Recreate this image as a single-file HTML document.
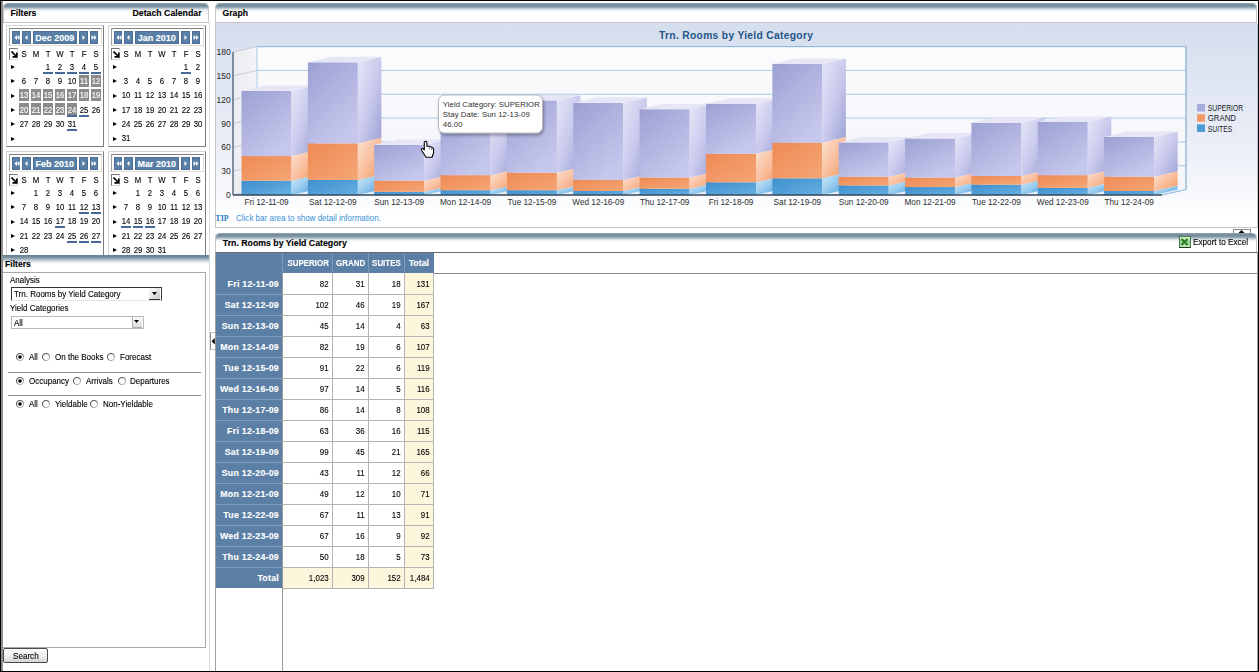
<!DOCTYPE html>
<html><head><meta charset="utf-8">
<style>
html,body{margin:0;padding:0;}
body{width:1259px;height:672px;overflow:hidden;position:relative;background:#fff;font-family:"Liberation Sans", sans-serif;font-size:8px;color:#000;-webkit-text-stroke:0.12px currentColor;}
.abs{position:absolute;}
.t{position:absolute;white-space:nowrap;line-height:1;}
.tn{font-size:8.8px;transform:scaleX(0.91);transform-origin:0 50%;}
.hdr{position:absolute;border-radius:5px 5px 0 0;background:linear-gradient(to bottom,#9aabb6 0px,#7890a0 1px,#758c9b 3px,#9aacb7 4.5px,#cdd7dd 6px,#eef2f4 7.5px,#fff 9px,#fff 100%);border-bottom:1px solid #c4c4c4;box-shadow:inset 1px 0 0 #c4c8cc,inset -1px 0 0 #c4c8cc;}
.cal{position:absolute;width:98px;height:122px;}
.calo{position:absolute;left:0;top:0;width:96px;height:120px;border:1px solid #d4d4d4;border-right:1.5px solid #7c7c7c;border-bottom:1.5px solid #7c7c7c;}
.nav{position:absolute;left:2.5px;top:3px;width:91px;height:16px;border:1px solid #e4ddd4;border-top-color:#808080;border-left-color:#a0a0a0;background:#fff;}
.nb{position:absolute;top:2px;height:12.6px;background:#5a7fa6;color:#fff;box-shadow:inset 0 0 0 1px #4d6f95;}
.dn{position:absolute;width:12px;text-align:center;line-height:1;font-size:9px;transform:scaleX(0.86);}
.hl{position:absolute;width:10.5px;height:12px;background:#8b8b8b;}
.ul{position:absolute;width:10.5px;height:2px;background:#46699a;}
.wk{position:absolute;width:0;height:0;border-left:4.2px solid #000;border-top:2.3px solid transparent;border-bottom:2.3px solid transparent;}
</style></head><body>

<div class="abs" style="left:0;top:0;width:1259px;height:1px;background:#000"></div>
<div class="abs" style="left:0;top:671px;width:1259px;height:1px;background:#000"></div>
<div class="abs" style="left:0;top:0;width:1px;height:672px;background:#000"></div>
<div class="abs" style="left:1px;top:1px;width:2px;height:670px;background:#8e8e8e"></div>
<div class="abs" style="left:1258px;top:0;width:1px;height:672px;background:#000"></div>
<div class="hdr" style="left:3px;top:3px;width:206px;height:19px;"></div>
<div class="t" style="left:10.5px;top:9.2px;font-weight:bold;font-size:8.6px;">Filters</div>
<div class="t" style="left:132.5px;top:9.2px;font-weight:bold;font-size:8.75px;">Detach Calendar</div>
<div class="abs" style="left:209px;top:22px;width:1px;height:649px;background:#d8dde2"></div>
<div class="abs" style="left:0;top:0;width:209px;height:255px;overflow:hidden;">
<div class="cal" style="left:6px;top:25px;"><div class="calo"></div><div class="nav"><div class="nb" style="left:2.15px;width:8.549999999999999px;"><svg width="9" height="13" style="position:absolute;left:0;top:0"><path d="M2.5 6.5 L5 4 L5 9 Z M5 6.5 L7.5 4 L7.5 9 Z" fill="#fff"/></svg></div><div class="nb" style="left:12.6px;width:8.799999999999999px;"><svg width="9" height="13" style="position:absolute;left:0;top:0"><path d="M3 6.5 L5.5 4 L5.5 9 Z" fill="#fff"/></svg></div><div class="nb" style="left:23.1px;width:44.49999999999999px;"><div class="t" style="left:0;width:44.49999999999999px;text-align:center;top:2.5px;font-weight:bold;font-size:9px;">Dec 2009</div></div><div class="nb" style="left:69.7px;width:8.599999999999994px;"><svg width="9" height="13" style="position:absolute;left:0;top:0"><path d="M6 6.5 L3.5 4 L3.5 9 Z" fill="#fff"/></svg></div><div class="nb" style="left:80.3px;width:8.600000000000009px;"><svg width="9" height="13" style="position:absolute;left:0;top:0"><path d="M6.5 6.5 L4 4 L4 9 Z M4 6.5 L1.5 4 L1.5 9 Z" fill="#fff"/></svg></div></div><div class="abs" style="left:2.5px;top:23px;width:7px;height:10px;border:1px solid #d8d8d8;border-top-color:#777;border-left-color:#777;"></div><svg width="8" height="8" style="position:absolute;left:4.5px;top:25.5px"><path d="M0.5 0.5 L5.5 5.5 M5.8 1.5 L5.8 5.8 L1.5 5.8" stroke="#000" stroke-width="1.7" fill="none"/></svg><div class="dn" style="left:11.75px;top:24.9px;">S</div><div class="dn" style="left:23.75px;top:24.9px;">M</div><div class="dn" style="left:35.75px;top:24.9px;">T</div><div class="dn" style="left:47.75px;top:24.9px;">W</div><div class="dn" style="left:59.75px;top:24.9px;">T</div><div class="dn" style="left:71.75px;top:24.9px;">F</div><div class="dn" style="left:83.75px;top:24.9px;">S</div><div class="wk" style="left:4.6px;top:40.099999999999994px;"></div><div class="ul" style="left:36.5px;top:46.699999999999996px;"></div><div class="dn" style="left:35.75px;top:37.699999999999996px;color:#000">1</div><div class="ul" style="left:48.5px;top:46.699999999999996px;"></div><div class="dn" style="left:47.75px;top:37.699999999999996px;color:#000">2</div><div class="ul" style="left:60.5px;top:46.699999999999996px;"></div><div class="dn" style="left:59.75px;top:37.699999999999996px;color:#000">3</div><div class="ul" style="left:72.5px;top:46.699999999999996px;"></div><div class="dn" style="left:71.75px;top:37.699999999999996px;color:#000">4</div><div class="ul" style="left:84.5px;top:46.699999999999996px;"></div><div class="dn" style="left:83.75px;top:37.699999999999996px;color:#000">5</div><div class="wk" style="left:4.6px;top:54.39999999999999px;"></div><div class="dn" style="left:11.75px;top:51.99999999999999px;color:#000">6</div><div class="dn" style="left:23.75px;top:51.99999999999999px;color:#000">7</div><div class="dn" style="left:35.75px;top:51.99999999999999px;color:#000">8</div><div class="dn" style="left:47.75px;top:51.99999999999999px;color:#000">9</div><div class="dn" style="left:59.75px;top:51.99999999999999px;color:#000">10</div><div class="hl" style="left:72.5px;top:49.8px;"></div><div class="dn" style="left:71.75px;top:51.99999999999999px;color:#fff">11</div><div class="hl" style="left:84.5px;top:49.8px;"></div><div class="dn" style="left:83.75px;top:51.99999999999999px;color:#fff">12</div><div class="wk" style="left:4.6px;top:68.7px;"></div><div class="hl" style="left:12.5px;top:64.10000000000001px;"></div><div class="dn" style="left:11.75px;top:66.30000000000001px;color:#fff">13</div><div class="hl" style="left:24.5px;top:64.10000000000001px;"></div><div class="dn" style="left:23.75px;top:66.30000000000001px;color:#fff">14</div><div class="hl" style="left:36.5px;top:64.10000000000001px;"></div><div class="dn" style="left:35.75px;top:66.30000000000001px;color:#fff">15</div><div class="hl" style="left:48.5px;top:64.10000000000001px;"></div><div class="dn" style="left:47.75px;top:66.30000000000001px;color:#fff">16</div><div class="hl" style="left:60.5px;top:64.10000000000001px;"></div><div class="dn" style="left:59.75px;top:66.30000000000001px;color:#fff">17</div><div class="hl" style="left:72.5px;top:64.10000000000001px;"></div><div class="dn" style="left:71.75px;top:66.30000000000001px;color:#fff">18</div><div class="hl" style="left:84.5px;top:64.10000000000001px;"></div><div class="dn" style="left:83.75px;top:66.30000000000001px;color:#fff">19</div><div class="wk" style="left:4.6px;top:83.0px;"></div><div class="hl" style="left:12.5px;top:78.4px;"></div><div class="dn" style="left:11.75px;top:80.60000000000001px;color:#fff">20</div><div class="hl" style="left:24.5px;top:78.4px;"></div><div class="dn" style="left:23.75px;top:80.60000000000001px;color:#fff">21</div><div class="hl" style="left:36.5px;top:78.4px;"></div><div class="dn" style="left:35.75px;top:80.60000000000001px;color:#fff">22</div><div class="hl" style="left:48.5px;top:78.4px;"></div><div class="dn" style="left:47.75px;top:80.60000000000001px;color:#fff">23</div><div class="hl" style="left:60.5px;top:78.4px;"></div><div class="ul" style="left:60.5px;top:89.60000000000001px;"></div><div class="dn" style="left:59.75px;top:80.60000000000001px;color:#fff">24</div><div class="ul" style="left:72.5px;top:89.60000000000001px;"></div><div class="dn" style="left:71.75px;top:80.60000000000001px;color:#000">25</div><div class="dn" style="left:83.75px;top:80.60000000000001px;color:#000">26</div><div class="wk" style="left:4.6px;top:97.3px;"></div><div class="dn" style="left:11.75px;top:94.9px;color:#000">27</div><div class="dn" style="left:23.75px;top:94.9px;color:#000">28</div><div class="dn" style="left:35.75px;top:94.9px;color:#000">29</div><div class="dn" style="left:47.75px;top:94.9px;color:#000">30</div><div class="ul" style="left:60.5px;top:103.9px;"></div><div class="dn" style="left:59.75px;top:94.9px;color:#000">31</div><div class="wk" style="left:4.6px;top:111.6px;"></div></div>
<div class="cal" style="left:108px;top:25px;"><div class="calo"></div><div class="nav"><div class="nb" style="left:2.15px;width:8.549999999999999px;"><svg width="9" height="13" style="position:absolute;left:0;top:0"><path d="M2.5 6.5 L5 4 L5 9 Z M5 6.5 L7.5 4 L7.5 9 Z" fill="#fff"/></svg></div><div class="nb" style="left:12.6px;width:8.799999999999999px;"><svg width="9" height="13" style="position:absolute;left:0;top:0"><path d="M3 6.5 L5.5 4 L5.5 9 Z" fill="#fff"/></svg></div><div class="nb" style="left:23.1px;width:44.49999999999999px;"><div class="t" style="left:0;width:44.49999999999999px;text-align:center;top:2.5px;font-weight:bold;font-size:9px;">Jan 2010</div></div><div class="nb" style="left:69.7px;width:8.599999999999994px;"><svg width="9" height="13" style="position:absolute;left:0;top:0"><path d="M6 6.5 L3.5 4 L3.5 9 Z" fill="#fff"/></svg></div><div class="nb" style="left:80.3px;width:8.600000000000009px;"><svg width="9" height="13" style="position:absolute;left:0;top:0"><path d="M6.5 6.5 L4 4 L4 9 Z M4 6.5 L1.5 4 L1.5 9 Z" fill="#fff"/></svg></div></div><div class="abs" style="left:2.5px;top:23px;width:7px;height:10px;border:1px solid #d8d8d8;border-top-color:#777;border-left-color:#777;"></div><svg width="8" height="8" style="position:absolute;left:4.5px;top:25.5px"><path d="M0.5 0.5 L5.5 5.5 M5.8 1.5 L5.8 5.8 L1.5 5.8" stroke="#000" stroke-width="1.7" fill="none"/></svg><div class="dn" style="left:11.75px;top:24.9px;">S</div><div class="dn" style="left:23.75px;top:24.9px;">M</div><div class="dn" style="left:35.75px;top:24.9px;">T</div><div class="dn" style="left:47.75px;top:24.9px;">W</div><div class="dn" style="left:59.75px;top:24.9px;">T</div><div class="dn" style="left:71.75px;top:24.9px;">F</div><div class="dn" style="left:83.75px;top:24.9px;">S</div><div class="wk" style="left:4.6px;top:40.099999999999994px;"></div><div class="ul" style="left:72.5px;top:46.699999999999996px;"></div><div class="dn" style="left:71.75px;top:37.699999999999996px;color:#000">1</div><div class="dn" style="left:83.75px;top:37.699999999999996px;color:#000">2</div><div class="wk" style="left:4.6px;top:54.39999999999999px;"></div><div class="dn" style="left:11.75px;top:51.99999999999999px;color:#000">3</div><div class="dn" style="left:23.75px;top:51.99999999999999px;color:#000">4</div><div class="dn" style="left:35.75px;top:51.99999999999999px;color:#000">5</div><div class="dn" style="left:47.75px;top:51.99999999999999px;color:#000">6</div><div class="dn" style="left:59.75px;top:51.99999999999999px;color:#000">7</div><div class="dn" style="left:71.75px;top:51.99999999999999px;color:#000">8</div><div class="dn" style="left:83.75px;top:51.99999999999999px;color:#000">9</div><div class="wk" style="left:4.6px;top:68.7px;"></div><div class="dn" style="left:11.75px;top:66.30000000000001px;color:#000">10</div><div class="dn" style="left:23.75px;top:66.30000000000001px;color:#000">11</div><div class="dn" style="left:35.75px;top:66.30000000000001px;color:#000">12</div><div class="dn" style="left:47.75px;top:66.30000000000001px;color:#000">13</div><div class="dn" style="left:59.75px;top:66.30000000000001px;color:#000">14</div><div class="dn" style="left:71.75px;top:66.30000000000001px;color:#000">15</div><div class="dn" style="left:83.75px;top:66.30000000000001px;color:#000">16</div><div class="wk" style="left:4.6px;top:83.0px;"></div><div class="dn" style="left:11.75px;top:80.60000000000001px;color:#000">17</div><div class="dn" style="left:23.75px;top:80.60000000000001px;color:#000">18</div><div class="dn" style="left:35.75px;top:80.60000000000001px;color:#000">19</div><div class="dn" style="left:47.75px;top:80.60000000000001px;color:#000">20</div><div class="dn" style="left:59.75px;top:80.60000000000001px;color:#000">21</div><div class="dn" style="left:71.75px;top:80.60000000000001px;color:#000">22</div><div class="dn" style="left:83.75px;top:80.60000000000001px;color:#000">23</div><div class="wk" style="left:4.6px;top:97.3px;"></div><div class="dn" style="left:11.75px;top:94.9px;color:#000">24</div><div class="dn" style="left:23.75px;top:94.9px;color:#000">25</div><div class="dn" style="left:35.75px;top:94.9px;color:#000">26</div><div class="dn" style="left:47.75px;top:94.9px;color:#000">27</div><div class="dn" style="left:59.75px;top:94.9px;color:#000">28</div><div class="dn" style="left:71.75px;top:94.9px;color:#000">29</div><div class="dn" style="left:83.75px;top:94.9px;color:#000">30</div><div class="wk" style="left:4.6px;top:111.6px;"></div><div class="dn" style="left:11.75px;top:109.2px;color:#000">31</div></div>
<div class="cal" style="left:6px;top:151px;"><div class="calo"></div><div class="nav"><div class="nb" style="left:2.15px;width:8.549999999999999px;"><svg width="9" height="13" style="position:absolute;left:0;top:0"><path d="M2.5 6.5 L5 4 L5 9 Z M5 6.5 L7.5 4 L7.5 9 Z" fill="#fff"/></svg></div><div class="nb" style="left:12.6px;width:8.799999999999999px;"><svg width="9" height="13" style="position:absolute;left:0;top:0"><path d="M3 6.5 L5.5 4 L5.5 9 Z" fill="#fff"/></svg></div><div class="nb" style="left:23.1px;width:44.49999999999999px;"><div class="t" style="left:0;width:44.49999999999999px;text-align:center;top:2.5px;font-weight:bold;font-size:9px;">Feb 2010</div></div><div class="nb" style="left:69.7px;width:8.599999999999994px;"><svg width="9" height="13" style="position:absolute;left:0;top:0"><path d="M6 6.5 L3.5 4 L3.5 9 Z" fill="#fff"/></svg></div><div class="nb" style="left:80.3px;width:8.600000000000009px;"><svg width="9" height="13" style="position:absolute;left:0;top:0"><path d="M6.5 6.5 L4 4 L4 9 Z M4 6.5 L1.5 4 L1.5 9 Z" fill="#fff"/></svg></div></div><div class="abs" style="left:2.5px;top:23px;width:7px;height:10px;border:1px solid #d8d8d8;border-top-color:#777;border-left-color:#777;"></div><svg width="8" height="8" style="position:absolute;left:4.5px;top:25.5px"><path d="M0.5 0.5 L5.5 5.5 M5.8 1.5 L5.8 5.8 L1.5 5.8" stroke="#000" stroke-width="1.7" fill="none"/></svg><div class="dn" style="left:11.75px;top:24.9px;">S</div><div class="dn" style="left:23.75px;top:24.9px;">M</div><div class="dn" style="left:35.75px;top:24.9px;">T</div><div class="dn" style="left:47.75px;top:24.9px;">W</div><div class="dn" style="left:59.75px;top:24.9px;">T</div><div class="dn" style="left:71.75px;top:24.9px;">F</div><div class="dn" style="left:83.75px;top:24.9px;">S</div><div class="wk" style="left:4.6px;top:40.099999999999994px;"></div><div class="dn" style="left:23.75px;top:37.699999999999996px;color:#000">1</div><div class="dn" style="left:35.75px;top:37.699999999999996px;color:#000">2</div><div class="dn" style="left:47.75px;top:37.699999999999996px;color:#000">3</div><div class="dn" style="left:59.75px;top:37.699999999999996px;color:#000">4</div><div class="dn" style="left:71.75px;top:37.699999999999996px;color:#000">5</div><div class="dn" style="left:83.75px;top:37.699999999999996px;color:#000">6</div><div class="wk" style="left:4.6px;top:54.39999999999999px;"></div><div class="dn" style="left:11.75px;top:51.99999999999999px;color:#000">7</div><div class="dn" style="left:23.75px;top:51.99999999999999px;color:#000">8</div><div class="dn" style="left:35.75px;top:51.99999999999999px;color:#000">9</div><div class="dn" style="left:47.75px;top:51.99999999999999px;color:#000">10</div><div class="dn" style="left:59.75px;top:51.99999999999999px;color:#000">11</div><div class="ul" style="left:72.5px;top:60.99999999999999px;"></div><div class="dn" style="left:71.75px;top:51.99999999999999px;color:#000">12</div><div class="ul" style="left:84.5px;top:60.99999999999999px;"></div><div class="dn" style="left:83.75px;top:51.99999999999999px;color:#000">13</div><div class="wk" style="left:4.6px;top:68.7px;"></div><div class="dn" style="left:11.75px;top:66.30000000000001px;color:#000">14</div><div class="dn" style="left:23.75px;top:66.30000000000001px;color:#000">15</div><div class="dn" style="left:35.75px;top:66.30000000000001px;color:#000">16</div><div class="ul" style="left:48.5px;top:75.30000000000001px;"></div><div class="dn" style="left:47.75px;top:66.30000000000001px;color:#000">17</div><div class="dn" style="left:59.75px;top:66.30000000000001px;color:#000">18</div><div class="dn" style="left:71.75px;top:66.30000000000001px;color:#000">19</div><div class="dn" style="left:83.75px;top:66.30000000000001px;color:#000">20</div><div class="wk" style="left:4.6px;top:83.0px;"></div><div class="dn" style="left:11.75px;top:80.60000000000001px;color:#000">21</div><div class="dn" style="left:23.75px;top:80.60000000000001px;color:#000">22</div><div class="dn" style="left:35.75px;top:80.60000000000001px;color:#000">23</div><div class="dn" style="left:47.75px;top:80.60000000000001px;color:#000">24</div><div class="ul" style="left:60.5px;top:89.60000000000001px;"></div><div class="dn" style="left:59.75px;top:80.60000000000001px;color:#000">25</div><div class="ul" style="left:72.5px;top:89.60000000000001px;"></div><div class="dn" style="left:71.75px;top:80.60000000000001px;color:#000">26</div><div class="ul" style="left:84.5px;top:89.60000000000001px;"></div><div class="dn" style="left:83.75px;top:80.60000000000001px;color:#000">27</div><div class="wk" style="left:4.6px;top:97.3px;"></div><div class="dn" style="left:11.75px;top:94.9px;color:#000">28</div><div class="wk" style="left:4.6px;top:111.6px;"></div></div>
<div class="cal" style="left:108px;top:151px;"><div class="calo"></div><div class="nav"><div class="nb" style="left:2.15px;width:8.549999999999999px;"><svg width="9" height="13" style="position:absolute;left:0;top:0"><path d="M2.5 6.5 L5 4 L5 9 Z M5 6.5 L7.5 4 L7.5 9 Z" fill="#fff"/></svg></div><div class="nb" style="left:12.6px;width:8.799999999999999px;"><svg width="9" height="13" style="position:absolute;left:0;top:0"><path d="M3 6.5 L5.5 4 L5.5 9 Z" fill="#fff"/></svg></div><div class="nb" style="left:23.1px;width:44.49999999999999px;"><div class="t" style="left:0;width:44.49999999999999px;text-align:center;top:2.5px;font-weight:bold;font-size:9px;">Mar 2010</div></div><div class="nb" style="left:69.7px;width:8.599999999999994px;"><svg width="9" height="13" style="position:absolute;left:0;top:0"><path d="M6 6.5 L3.5 4 L3.5 9 Z" fill="#fff"/></svg></div><div class="nb" style="left:80.3px;width:8.600000000000009px;"><svg width="9" height="13" style="position:absolute;left:0;top:0"><path d="M6.5 6.5 L4 4 L4 9 Z M4 6.5 L1.5 4 L1.5 9 Z" fill="#fff"/></svg></div></div><div class="abs" style="left:2.5px;top:23px;width:7px;height:10px;border:1px solid #d8d8d8;border-top-color:#777;border-left-color:#777;"></div><svg width="8" height="8" style="position:absolute;left:4.5px;top:25.5px"><path d="M0.5 0.5 L5.5 5.5 M5.8 1.5 L5.8 5.8 L1.5 5.8" stroke="#000" stroke-width="1.7" fill="none"/></svg><div class="dn" style="left:11.75px;top:24.9px;">S</div><div class="dn" style="left:23.75px;top:24.9px;">M</div><div class="dn" style="left:35.75px;top:24.9px;">T</div><div class="dn" style="left:47.75px;top:24.9px;">W</div><div class="dn" style="left:59.75px;top:24.9px;">T</div><div class="dn" style="left:71.75px;top:24.9px;">F</div><div class="dn" style="left:83.75px;top:24.9px;">S</div><div class="wk" style="left:4.6px;top:40.099999999999994px;"></div><div class="dn" style="left:23.75px;top:37.699999999999996px;color:#000">1</div><div class="dn" style="left:35.75px;top:37.699999999999996px;color:#000">2</div><div class="dn" style="left:47.75px;top:37.699999999999996px;color:#000">3</div><div class="dn" style="left:59.75px;top:37.699999999999996px;color:#000">4</div><div class="dn" style="left:71.75px;top:37.699999999999996px;color:#000">5</div><div class="dn" style="left:83.75px;top:37.699999999999996px;color:#000">6</div><div class="wk" style="left:4.6px;top:54.39999999999999px;"></div><div class="dn" style="left:11.75px;top:51.99999999999999px;color:#000">7</div><div class="dn" style="left:23.75px;top:51.99999999999999px;color:#000">8</div><div class="dn" style="left:35.75px;top:51.99999999999999px;color:#000">9</div><div class="dn" style="left:47.75px;top:51.99999999999999px;color:#000">10</div><div class="dn" style="left:59.75px;top:51.99999999999999px;color:#000">11</div><div class="dn" style="left:71.75px;top:51.99999999999999px;color:#000">12</div><div class="dn" style="left:83.75px;top:51.99999999999999px;color:#000">13</div><div class="wk" style="left:4.6px;top:68.7px;"></div><div class="ul" style="left:12.5px;top:75.30000000000001px;"></div><div class="dn" style="left:11.75px;top:66.30000000000001px;color:#000">14</div><div class="ul" style="left:24.5px;top:75.30000000000001px;"></div><div class="dn" style="left:23.75px;top:66.30000000000001px;color:#000">15</div><div class="ul" style="left:36.5px;top:75.30000000000001px;"></div><div class="dn" style="left:35.75px;top:66.30000000000001px;color:#000">16</div><div class="dn" style="left:47.75px;top:66.30000000000001px;color:#000">17</div><div class="dn" style="left:59.75px;top:66.30000000000001px;color:#000">18</div><div class="dn" style="left:71.75px;top:66.30000000000001px;color:#000">19</div><div class="dn" style="left:83.75px;top:66.30000000000001px;color:#000">20</div><div class="wk" style="left:4.6px;top:83.0px;"></div><div class="dn" style="left:11.75px;top:80.60000000000001px;color:#000">21</div><div class="dn" style="left:23.75px;top:80.60000000000001px;color:#000">22</div><div class="dn" style="left:35.75px;top:80.60000000000001px;color:#000">23</div><div class="dn" style="left:47.75px;top:80.60000000000001px;color:#000">24</div><div class="dn" style="left:59.75px;top:80.60000000000001px;color:#000">25</div><div class="dn" style="left:71.75px;top:80.60000000000001px;color:#000">26</div><div class="dn" style="left:83.75px;top:80.60000000000001px;color:#000">27</div><div class="wk" style="left:4.6px;top:97.3px;"></div><div class="dn" style="left:11.75px;top:94.9px;color:#000">28</div><div class="dn" style="left:23.75px;top:94.9px;color:#000">29</div><div class="dn" style="left:35.75px;top:94.9px;color:#000">30</div><div class="dn" style="left:47.75px;top:94.9px;color:#000">31</div><div class="wk" style="left:4.6px;top:111.6px;"></div></div>
</div>
<div class="abs" style="left:3px;top:255px;width:206px;height:17px;background:linear-gradient(to bottom,#687f8d 0px,#71889a 1.5px,#93a6b2 3.5px,#c5d1d8 5.5px,#eef2f4 7.5px,#fff 9px,#fff 100%);"></div>
<div class="t" style="left:5px;top:260px;font-weight:bold;font-size:8.6px;">Filters</div>
<div class="abs" style="left:3px;top:272px;width:202px;height:374px;border:1px solid #a8a8a8;border-left:none;"></div>
<div class="t tn" style="left:10px;top:275.6px;">Analysis</div>
<div class="abs" style="left:11px;top:287px;width:149px;height:11.5px;border:1px solid #e4e4e4;border-top-color:#333;border-left-color:#333;border-right-color:#333;background:#fff;"></div>
<div class="t tn" style="left:14px;top:289.6px;">Trn. Rooms by Yield Category</div>
<div class="abs" style="left:148.5px;top:288px;width:11.5px;height:10.5px;background:linear-gradient(135deg,#ffffff,#e4e4e4 50%,#c8c8c8);border-bottom:1px solid #333;"></div>
<svg width="6" height="4" style="position:absolute;left:151.5px;top:292.3px"><path d="M0 0 L5 0 L2.5 3.2 Z" fill="#000"/></svg>
<div class="t tn" style="left:10px;top:304.4px;">Yield Categories</div>
<div class="abs" style="left:11px;top:315.5px;width:131px;height:11.5px;border:1px solid #b8b8b8;background:#fff;"></div>
<div class="t tn" style="left:13.5px;top:318.6px;">All</div>
<div class="abs" style="left:132px;top:316.5px;width:9px;height:10.5px;background:linear-gradient(#fbfbfb,#dcdcdc);border:1px solid #b0b0b0;border-top:none;border-right:none;"></div>
<svg width="6" height="4" style="position:absolute;left:134px;top:320px"><path d="M0 0 L5 0 L2.5 3 Z" fill="#000"/></svg>
<svg width="12" height="12" style="position:absolute;left:14.3px;top:351.1px"><defs><linearGradient id="rg" x1="0" y1="0" x2="1" y2="1"><stop offset="0" stop-color="#333"/><stop offset="0.5" stop-color="#777"/><stop offset="1" stop-color="#ddd"/></linearGradient></defs><circle cx="6" cy="6" r="3.5" fill="#fff" stroke="url(#rg)" stroke-width="1.1"/><circle cx="6" cy="6" r="1.8" fill="#000"/></svg>
<div class="t tn" style="left:29px;top:352.8px;">All</div>
<svg width="12" height="12" style="position:absolute;left:40.3px;top:351.1px"><defs><linearGradient id="rg" x1="0" y1="0" x2="1" y2="1"><stop offset="0" stop-color="#333"/><stop offset="0.5" stop-color="#777"/><stop offset="1" stop-color="#ddd"/></linearGradient></defs><circle cx="6" cy="6" r="3.5" fill="#fff" stroke="url(#rg)" stroke-width="1.1"/></svg>
<div class="t tn" style="left:55px;top:352.8px;">On the Books</div>
<svg width="12" height="12" style="position:absolute;left:105.3px;top:351.1px"><defs><linearGradient id="rg" x1="0" y1="0" x2="1" y2="1"><stop offset="0" stop-color="#333"/><stop offset="0.5" stop-color="#777"/><stop offset="1" stop-color="#ddd"/></linearGradient></defs><circle cx="6" cy="6" r="3.5" fill="#fff" stroke="url(#rg)" stroke-width="1.1"/></svg>
<div class="t tn" style="left:120px;top:352.8px;">Forecast</div>
<div class="abs" style="left:8px;top:372px;width:193px;height:1px;background:#8c8c8c"></div>
<svg width="12" height="12" style="position:absolute;left:14.3px;top:375.40000000000003px"><defs><linearGradient id="rg" x1="0" y1="0" x2="1" y2="1"><stop offset="0" stop-color="#333"/><stop offset="0.5" stop-color="#777"/><stop offset="1" stop-color="#ddd"/></linearGradient></defs><circle cx="6" cy="6" r="3.5" fill="#fff" stroke="url(#rg)" stroke-width="1.1"/><circle cx="6" cy="6" r="1.8" fill="#000"/></svg>
<div class="t tn" style="left:29px;top:377.1px;">Occupancy</div>
<svg width="12" height="12" style="position:absolute;left:71.3px;top:375.40000000000003px"><defs><linearGradient id="rg" x1="0" y1="0" x2="1" y2="1"><stop offset="0" stop-color="#333"/><stop offset="0.5" stop-color="#777"/><stop offset="1" stop-color="#ddd"/></linearGradient></defs><circle cx="6" cy="6" r="3.5" fill="#fff" stroke="url(#rg)" stroke-width="1.1"/></svg>
<div class="t tn" style="left:86px;top:377.1px;">Arrivals</div>
<svg width="12" height="12" style="position:absolute;left:116.3px;top:375.40000000000003px"><defs><linearGradient id="rg" x1="0" y1="0" x2="1" y2="1"><stop offset="0" stop-color="#333"/><stop offset="0.5" stop-color="#777"/><stop offset="1" stop-color="#ddd"/></linearGradient></defs><circle cx="6" cy="6" r="3.5" fill="#fff" stroke="url(#rg)" stroke-width="1.1"/></svg>
<div class="t tn" style="left:130px;top:377.1px;">Departures</div>
<div class="abs" style="left:8px;top:394.5px;width:193px;height:1px;background:#8c8c8c"></div>
<svg width="12" height="12" style="position:absolute;left:14.3px;top:397.8px"><defs><linearGradient id="rg" x1="0" y1="0" x2="1" y2="1"><stop offset="0" stop-color="#333"/><stop offset="0.5" stop-color="#777"/><stop offset="1" stop-color="#ddd"/></linearGradient></defs><circle cx="6" cy="6" r="3.5" fill="#fff" stroke="url(#rg)" stroke-width="1.1"/><circle cx="6" cy="6" r="1.8" fill="#000"/></svg>
<div class="t tn" style="left:29px;top:399.5px;">All</div>
<svg width="12" height="12" style="position:absolute;left:40.3px;top:397.8px"><defs><linearGradient id="rg" x1="0" y1="0" x2="1" y2="1"><stop offset="0" stop-color="#333"/><stop offset="0.5" stop-color="#777"/><stop offset="1" stop-color="#ddd"/></linearGradient></defs><circle cx="6" cy="6" r="3.5" fill="#fff" stroke="url(#rg)" stroke-width="1.1"/></svg>
<div class="t tn" style="left:55px;top:399.5px;">Yieldable</div>
<svg width="12" height="12" style="position:absolute;left:88.3px;top:397.8px"><defs><linearGradient id="rg" x1="0" y1="0" x2="1" y2="1"><stop offset="0" stop-color="#333"/><stop offset="0.5" stop-color="#777"/><stop offset="1" stop-color="#ddd"/></linearGradient></defs><circle cx="6" cy="6" r="3.5" fill="#fff" stroke="url(#rg)" stroke-width="1.1"/></svg>
<div class="t tn" style="left:103px;top:399.5px;">Non-Yieldable</div>
<div class="abs" style="left:3px;top:648px;width:42.5px;height:12.5px;border:1.5px solid #4a4a4a;border-radius:2px;background:linear-gradient(#fdfdfd,#f0f0f0 50%,#d6d6d6);"></div>
<div class="t" style="left:12.5px;top:651.6px;font-size:9px;transform:scaleX(0.9);transform-origin:left center;">Search</div>
<div class="abs" style="left:210px;top:332px;width:4px;height:16px;border:1px solid #c0c0c0;border-right:none;border-left-color:#909090;background:#fff;"></div>
<svg width="5" height="7" style="position:absolute;left:211px;top:337.5px"><path d="M3.8 0 L0.6 3.2 L3.8 6.4 Z" fill="#000"/></svg>
<div class="hdr" style="left:215px;top:3px;width:1042px;height:19px;"></div>
<div class="t" style="left:222.6px;top:9.2px;font-weight:bold;font-size:8.6px;">Graph</div>
<div class="abs" style="left:215px;top:23px;width:1041px;height:204px;border:1px solid #c0c8d0;border-top:none;background:linear-gradient(to bottom,#d5deee 0px,#dce3f1 40px,#e8ecf6 110px,#f5f7fb 165px,#fff 190px);"></div>
<svg width="1259" height="672" style="position:absolute;left:0;top:0"><defs>
<linearGradient id="wallg" x1="0" y1="0" x2="0" y2="1"><stop offset="0" stop-color="#fbfbfd"/><stop offset="1" stop-color="#f4f5fa"/></linearGradient>
<linearGradient id="lwall" x1="0" y1="0" x2="1" y2="0"><stop offset="0" stop-color="#ececf1"/><stop offset="1" stop-color="#f3f4f7"/></linearGradient>
<linearGradient id="supF" x1="0" y1="0" x2="0.6" y2="1"><stop offset="0" stop-color="#9ca0d2"/><stop offset="1" stop-color="#c6c7ed"/></linearGradient>
<linearGradient id="supS" x1="0" y1="0" x2="1" y2="1"><stop offset="0" stop-color="#e6e6f7"/><stop offset="0.5" stop-color="#cacbed"/><stop offset="1" stop-color="#9ea1d6"/></linearGradient>
<linearGradient id="grdF" x1="0" y1="0" x2="1" y2="1"><stop offset="0" stop-color="#ee8a54"/><stop offset="1" stop-color="#f5a676"/></linearGradient>
<linearGradient id="grdS" x1="0" y1="0" x2="1" y2="1"><stop offset="0" stop-color="#fde2d2"/><stop offset="0.5" stop-color="#f9c0a0"/><stop offset="1" stop-color="#ef9760"/></linearGradient>
<linearGradient id="suiF" x1="0" y1="0" x2="1" y2="1"><stop offset="0" stop-color="#3f8fcd"/><stop offset="1" stop-color="#66b0e2"/></linearGradient>
<linearGradient id="suiS" x1="0" y1="0" x2="1" y2="1"><stop offset="0" stop-color="#cce8fa"/><stop offset="0.45" stop-color="#9ccef0"/><stop offset="1" stop-color="#4898d6"/></linearGradient>
<filter id="shd" x="-10%" y="-10%" width="130%" height="140%"><feGaussianBlur in="SourceAlpha" stdDeviation="1.5"/><feOffset dx="1" dy="2"/><feComponentTransfer><feFuncA type="linear" slope="0.35"/></feComponentTransfer><feMerge><feMergeNode/><feMergeNode in="SourceGraphic"/></feMerge></filter>
</defs><text x="736" y="38.7" text-anchor="middle" font-family="Liberation Sans" font-weight="bold" font-size="10.3" fill="#24558a" textLength="154" lengthAdjust="spacing">Trn. Rooms by Yield Category</text><rect x="257.0" y="46.6" width="929.0" height="143.0" fill="url(#wallg)"/><polygon points="233.0,52 257.0,46.6 257.0,189.6 233.0,195.0" fill="url(#lwall)"/><polygon points="233.0,195.0 257.0,189.6 1186.0,189.6 1162.0,195.0" fill="#e4eef8"/><line x1="233.0" y1="195.00" x2="257.0" y2="189.60" stroke="#c8ccd8" stroke-width="1"/><text x="230.8" y="198.00" text-anchor="end" font-family="Liberation Sans" font-size="8.5" fill="#282828">0</text><line x1="257.0" y1="165.77" x2="1186.0" y2="165.77" stroke="#a9cbe6" stroke-width="1"/><line x1="233.0" y1="171.17" x2="257.0" y2="165.77" stroke="#c8ccd8" stroke-width="1"/><text x="230.8" y="174.17" text-anchor="end" font-family="Liberation Sans" font-size="8.5" fill="#282828">30</text><line x1="257.0" y1="141.93" x2="1186.0" y2="141.93" stroke="#a9cbe6" stroke-width="1"/><line x1="233.0" y1="147.33" x2="257.0" y2="141.93" stroke="#c8ccd8" stroke-width="1"/><text x="230.8" y="150.33" text-anchor="end" font-family="Liberation Sans" font-size="8.5" fill="#282828">60</text><line x1="257.0" y1="118.10" x2="1186.0" y2="118.10" stroke="#a9cbe6" stroke-width="1"/><line x1="233.0" y1="123.50" x2="257.0" y2="118.10" stroke="#c8ccd8" stroke-width="1"/><text x="230.8" y="126.50" text-anchor="end" font-family="Liberation Sans" font-size="8.5" fill="#282828">90</text><line x1="257.0" y1="94.27" x2="1186.0" y2="94.27" stroke="#a9cbe6" stroke-width="1"/><line x1="233.0" y1="99.67" x2="257.0" y2="94.27" stroke="#c8ccd8" stroke-width="1"/><text x="230.8" y="102.67" text-anchor="end" font-family="Liberation Sans" font-size="8.5" fill="#282828">120</text><line x1="257.0" y1="70.43" x2="1186.0" y2="70.43" stroke="#a9cbe6" stroke-width="1"/><line x1="233.0" y1="75.83" x2="257.0" y2="70.43" stroke="#c8ccd8" stroke-width="1"/><text x="230.8" y="78.83" text-anchor="end" font-family="Liberation Sans" font-size="8.5" fill="#282828">150</text><line x1="257.0" y1="46.60" x2="1186.0" y2="46.60" stroke="#a9cbe6" stroke-width="1"/><line x1="233.0" y1="52.00" x2="257.0" y2="46.60" stroke="#c8ccd8" stroke-width="1"/><text x="230.8" y="55.00" text-anchor="end" font-family="Liberation Sans" font-size="8.5" fill="#282828">180</text><line x1="257.0" y1="46.6" x2="257.0" y2="189.6" stroke="#a9cbe6" stroke-width="1"/><line x1="1186.0" y1="46.6" x2="1186.0" y2="189.6" stroke="#6f9cc6" stroke-width="1"/><line x1="257.0" y1="46.6" x2="1186.0" y2="46.6" stroke="#8ab8dc" stroke-width="1"/><line x1="1162.0" y1="195.0" x2="1186.0" y2="189.6" stroke="#8ab8dc" stroke-width="1"/><rect x="241.50" y="180.70" width="50" height="14.30" fill="url(#suiF)"/><polygon points="291.50,180.70 315.00,175.20 315.00,189.50 291.50,195.00" fill="url(#suiS)"/><rect x="241.50" y="156.07" width="50" height="24.63" fill="url(#grdF)"/><polygon points="291.50,156.07 315.00,150.57 315.00,175.20 291.50,180.70" fill="url(#grdS)"/><rect x="241.50" y="90.93" width="50" height="65.14" fill="url(#supF)"/><polygon points="291.50,90.93 315.00,85.43 315.00,150.57 291.50,156.07" fill="url(#supS)"/><polygon points="241.50,90.93 291.50,90.93 315.00,85.43 265.00,85.43" fill="#e6e6f7"/><text x="266.50" y="205.3" text-anchor="middle" font-family="Liberation Sans" font-size="8.9" fill="#303030" textLength="44.14" lengthAdjust="spacingAndGlyphs">Fri 12-11-09</text><rect x="307.86" y="179.91" width="50" height="15.09" fill="url(#suiF)"/><polygon points="357.86,179.91 381.36,174.41 381.36,189.50 357.86,195.00" fill="url(#suiS)"/><rect x="307.86" y="143.36" width="50" height="36.54" fill="url(#grdF)"/><polygon points="357.86,143.36 381.36,137.86 381.36,174.41 357.86,179.91" fill="url(#grdS)"/><rect x="307.86" y="62.33" width="50" height="81.03" fill="url(#supF)"/><polygon points="357.86,62.33 381.36,56.83 381.36,137.86 357.86,143.36" fill="url(#supS)"/><polygon points="307.86,62.33 357.86,62.33 381.36,56.83 331.36,56.83" fill="#e6e6f7"/><text x="332.86" y="205.3" text-anchor="middle" font-family="Liberation Sans" font-size="8.9" fill="#303030" textLength="47.50" lengthAdjust="spacingAndGlyphs">Sat 12-12-09</text><rect x="374.21" y="191.82" width="50" height="3.18" fill="url(#suiF)"/><polygon points="424.21,191.82 447.71,186.32 447.71,189.50 424.21,195.00" fill="url(#suiS)"/><rect x="374.21" y="180.70" width="50" height="11.12" fill="url(#grdF)"/><polygon points="424.21,180.70 447.71,175.20 447.71,186.32 424.21,191.82" fill="url(#grdS)"/><rect x="374.21" y="144.95" width="50" height="35.75" fill="url(#supF)"/><polygon points="424.21,144.95 447.71,139.45 447.71,175.20 424.21,180.70" fill="url(#supS)"/><polygon points="374.21,144.95 424.21,144.95 447.71,139.45 397.71,139.45" fill="#e6e6f7"/><text x="399.21" y="205.3" text-anchor="middle" font-family="Liberation Sans" font-size="8.9" fill="#303030" textLength="49.79" lengthAdjust="spacingAndGlyphs">Sun 12-13-09</text><rect x="440.57" y="190.23" width="50" height="4.77" fill="url(#suiF)"/><polygon points="490.57,190.23 514.07,184.73 514.07,189.50 490.57,195.00" fill="url(#suiS)"/><rect x="440.57" y="175.14" width="50" height="15.09" fill="url(#grdF)"/><polygon points="490.57,175.14 514.07,169.64 514.07,184.73 490.57,190.23" fill="url(#grdS)"/><rect x="440.57" y="109.99" width="50" height="65.14" fill="url(#supF)"/><polygon points="490.57,109.99 514.07,104.49 514.07,169.64 490.57,175.14" fill="url(#supS)"/><polygon points="440.57,109.99 490.57,109.99 514.07,104.49 464.07,104.49" fill="#e6e6f7"/><text x="465.57" y="205.3" text-anchor="middle" font-family="Liberation Sans" font-size="8.9" fill="#303030" textLength="51.15" lengthAdjust="spacingAndGlyphs">Mon 12-14-09</text><rect x="506.93" y="190.23" width="50" height="4.77" fill="url(#suiF)"/><polygon points="556.93,190.23 580.43,184.73 580.43,189.50 556.93,195.00" fill="url(#suiS)"/><rect x="506.93" y="172.76" width="50" height="17.48" fill="url(#grdF)"/><polygon points="556.93,172.76 580.43,167.26 580.43,184.73 556.93,190.23" fill="url(#grdS)"/><rect x="506.93" y="100.46" width="50" height="72.29" fill="url(#supF)"/><polygon points="556.93,100.46 580.43,94.96 580.43,167.26 556.93,172.76" fill="url(#supS)"/><polygon points="506.93,100.46 556.93,100.46 580.43,94.96 530.43,94.96" fill="#e6e6f7"/><text x="531.93" y="205.3" text-anchor="middle" font-family="Liberation Sans" font-size="8.9" fill="#303030" textLength="49.02" lengthAdjust="spacingAndGlyphs">Tue 12-15-09</text><rect x="573.29" y="191.03" width="50" height="3.97" fill="url(#suiF)"/><polygon points="623.29,191.03 646.79,185.53 646.79,189.50 623.29,195.00" fill="url(#suiS)"/><rect x="573.29" y="179.91" width="50" height="11.12" fill="url(#grdF)"/><polygon points="623.29,179.91 646.79,174.41 646.79,185.53 623.29,191.03" fill="url(#grdS)"/><rect x="573.29" y="102.84" width="50" height="77.06" fill="url(#supF)"/><polygon points="623.29,102.84 646.79,97.34 646.79,174.41 623.29,179.91" fill="url(#supS)"/><polygon points="573.29,102.84 623.29,102.84 646.79,97.34 596.79,97.34" fill="#e6e6f7"/><text x="598.29" y="205.3" text-anchor="middle" font-family="Liberation Sans" font-size="8.9" fill="#303030" textLength="51.92" lengthAdjust="spacingAndGlyphs">Wed 12-16-09</text><rect x="639.64" y="188.64" width="50" height="6.36" fill="url(#suiF)"/><polygon points="689.64,188.64 713.14,183.14 713.14,189.50 689.64,195.00" fill="url(#suiS)"/><rect x="639.64" y="177.52" width="50" height="11.12" fill="url(#grdF)"/><polygon points="689.64,177.52 713.14,172.02 713.14,183.14 689.64,188.64" fill="url(#grdS)"/><rect x="639.64" y="109.20" width="50" height="68.32" fill="url(#supF)"/><polygon points="689.64,109.20 713.14,103.70 713.14,172.02 689.64,177.52" fill="url(#supS)"/><polygon points="639.64,109.20 689.64,109.20 713.14,103.70 663.14,103.70" fill="#e6e6f7"/><text x="664.64" y="205.3" text-anchor="middle" font-family="Liberation Sans" font-size="8.9" fill="#303030" textLength="49.33" lengthAdjust="spacingAndGlyphs">Thu 12-17-09</text><rect x="706.00" y="182.29" width="50" height="12.71" fill="url(#suiF)"/><polygon points="756.00,182.29 779.50,176.79 779.50,189.50 756.00,195.00" fill="url(#suiS)"/><rect x="706.00" y="153.69" width="50" height="28.60" fill="url(#grdF)"/><polygon points="756.00,153.69 779.50,148.19 779.50,176.79 756.00,182.29" fill="url(#grdS)"/><rect x="706.00" y="103.64" width="50" height="50.05" fill="url(#supF)"/><polygon points="756.00,103.64 779.50,98.14 779.50,148.19 756.00,153.69" fill="url(#supS)"/><polygon points="706.00,103.64 756.00,103.64 779.50,98.14 729.50,98.14" fill="#e6e6f7"/><text x="731.00" y="205.3" text-anchor="middle" font-family="Liberation Sans" font-size="8.9" fill="#303030" textLength="44.75" lengthAdjust="spacingAndGlyphs">Fri 12-18-09</text><rect x="772.36" y="178.32" width="50" height="16.68" fill="url(#suiF)"/><polygon points="822.36,178.32 845.86,172.82 845.86,189.50 822.36,195.00" fill="url(#suiS)"/><rect x="772.36" y="142.57" width="50" height="35.75" fill="url(#grdF)"/><polygon points="822.36,142.57 845.86,137.07 845.86,172.82 822.36,178.32" fill="url(#grdS)"/><rect x="772.36" y="63.92" width="50" height="78.65" fill="url(#supF)"/><polygon points="822.36,63.92 845.86,58.42 845.86,137.07 822.36,142.57" fill="url(#supS)"/><polygon points="772.36,63.92 822.36,63.92 845.86,58.42 795.86,58.42" fill="#e6e6f7"/><text x="797.36" y="205.3" text-anchor="middle" font-family="Liberation Sans" font-size="8.9" fill="#303030" textLength="47.50" lengthAdjust="spacingAndGlyphs">Sat 12-19-09</text><rect x="838.71" y="185.47" width="50" height="9.53" fill="url(#suiF)"/><polygon points="888.71,185.47 912.21,179.97 912.21,189.50 888.71,195.00" fill="url(#suiS)"/><rect x="838.71" y="176.73" width="50" height="8.74" fill="url(#grdF)"/><polygon points="888.71,176.73 912.21,171.23 912.21,179.97 888.71,185.47" fill="url(#grdS)"/><rect x="838.71" y="142.57" width="50" height="34.16" fill="url(#supF)"/><polygon points="888.71,142.57 912.21,137.07 912.21,171.23 888.71,176.73" fill="url(#supS)"/><polygon points="838.71,142.57 888.71,142.57 912.21,137.07 862.21,137.07" fill="#e6e6f7"/><text x="863.71" y="205.3" text-anchor="middle" font-family="Liberation Sans" font-size="8.9" fill="#303030" textLength="49.79" lengthAdjust="spacingAndGlyphs">Sun 12-20-09</text><rect x="905.07" y="187.06" width="50" height="7.94" fill="url(#suiF)"/><polygon points="955.07,187.06 978.57,181.56 978.57,189.50 955.07,195.00" fill="url(#suiS)"/><rect x="905.07" y="177.52" width="50" height="9.53" fill="url(#grdF)"/><polygon points="955.07,177.52 978.57,172.02 978.57,181.56 955.07,187.06" fill="url(#grdS)"/><rect x="905.07" y="138.59" width="50" height="38.93" fill="url(#supF)"/><polygon points="955.07,138.59 978.57,133.09 978.57,172.02 955.07,177.52" fill="url(#supS)"/><polygon points="905.07,138.59 955.07,138.59 978.57,133.09 928.57,133.09" fill="#e6e6f7"/><text x="930.07" y="205.3" text-anchor="middle" font-family="Liberation Sans" font-size="8.9" fill="#303030" textLength="51.15" lengthAdjust="spacingAndGlyphs">Mon 12-21-09</text><rect x="971.43" y="184.67" width="50" height="10.33" fill="url(#suiF)"/><polygon points="1021.43,184.67 1044.93,179.17 1044.93,189.50 1021.43,195.00" fill="url(#suiS)"/><rect x="971.43" y="175.93" width="50" height="8.74" fill="url(#grdF)"/><polygon points="1021.43,175.93 1044.93,170.43 1044.93,179.17 1021.43,184.67" fill="url(#grdS)"/><rect x="971.43" y="122.71" width="50" height="53.23" fill="url(#supF)"/><polygon points="1021.43,122.71 1044.93,117.21 1044.93,170.43 1021.43,175.93" fill="url(#supS)"/><polygon points="971.43,122.71 1021.43,122.71 1044.93,117.21 994.93,117.21" fill="#e6e6f7"/><text x="996.43" y="205.3" text-anchor="middle" font-family="Liberation Sans" font-size="8.9" fill="#303030" textLength="49.02" lengthAdjust="spacingAndGlyphs">Tue 12-22-09</text><rect x="1037.79" y="187.85" width="50" height="7.15" fill="url(#suiF)"/><polygon points="1087.79,187.85 1111.29,182.35 1111.29,189.50 1087.79,195.00" fill="url(#suiS)"/><rect x="1037.79" y="175.14" width="50" height="12.71" fill="url(#grdF)"/><polygon points="1087.79,175.14 1111.29,169.64 1111.29,182.35 1087.79,187.85" fill="url(#grdS)"/><rect x="1037.79" y="121.91" width="50" height="53.23" fill="url(#supF)"/><polygon points="1087.79,121.91 1111.29,116.41 1111.29,169.64 1087.79,175.14" fill="url(#supS)"/><polygon points="1037.79,121.91 1087.79,121.91 1111.29,116.41 1061.29,116.41" fill="#e6e6f7"/><text x="1062.79" y="205.3" text-anchor="middle" font-family="Liberation Sans" font-size="8.9" fill="#303030" textLength="51.92" lengthAdjust="spacingAndGlyphs">Wed 12-23-09</text><rect x="1104.14" y="191.03" width="50" height="3.97" fill="url(#suiF)"/><polygon points="1154.14,191.03 1177.64,185.53 1177.64,189.50 1154.14,195.00" fill="url(#suiS)"/><rect x="1104.14" y="176.73" width="50" height="14.30" fill="url(#grdF)"/><polygon points="1154.14,176.73 1177.64,171.23 1177.64,185.53 1154.14,191.03" fill="url(#grdS)"/><rect x="1104.14" y="137.01" width="50" height="39.72" fill="url(#supF)"/><polygon points="1154.14,137.01 1177.64,131.51 1177.64,171.23 1154.14,176.73" fill="url(#supS)"/><polygon points="1104.14,137.01 1154.14,137.01 1177.64,131.51 1127.64,131.51" fill="#e6e6f7"/><text x="1129.14" y="205.3" text-anchor="middle" font-family="Liberation Sans" font-size="8.9" fill="#303030" textLength="49.33" lengthAdjust="spacingAndGlyphs">Thu 12-24-09</text><line x1="233.0" y1="52" x2="233.0" y2="195.0" stroke="#4a5a6c" stroke-width="1.3"/><line x1="233.0" y1="195.0" x2="1162.0" y2="195.0" stroke="#34465a" stroke-width="1.4"/><rect x="1197" y="104.00" width="8" height="7.5" fill="#a8abdf"/><text x="1207.8" y="111.20" font-family="Liberation Sans" font-size="8.2" fill="#202020" textLength="35.2" lengthAdjust="spacingAndGlyphs">SUPERIOR</text><rect x="1197" y="114.20" width="8" height="7.5" fill="#f39a66"/><text x="1207.8" y="121.40" font-family="Liberation Sans" font-size="8.2" fill="#202020" textLength="28.1" lengthAdjust="spacingAndGlyphs">GRAND</text><rect x="1197" y="124.40" width="8" height="7.5" fill="#4c9ad4"/><text x="1207.8" y="131.60" font-family="Liberation Sans" font-size="8.2" fill="#202020" textLength="24.4" lengthAdjust="spacingAndGlyphs">SUITES</text><rect x="438.5" y="95" width="104" height="38" rx="6" ry="6" fill="#fff" stroke="#b8b8c0" stroke-width="1" filter="url(#shd)"/><text x="442.8" y="107.40" font-family="Liberation Sans" font-size="7.8" fill="#303030" letter-spacing="0.05">Yield Category: SUPERIOR</text><text x="442.8" y="117.00" font-family="Liberation Sans" font-size="7.8" fill="#303030" letter-spacing="0.05">Stay Date: Sun 12-13-09</text><text x="442.8" y="126.60" font-family="Liberation Sans" font-size="7.8" fill="#303030" letter-spacing="0.05">46.00</text><path d="M424.3 142.2 Q425.6 140.4 426.9 142.2 L426.9 146.3 L429.5 146.3 L431.8 147.2 L433.6 148.6 L433.6 153 L432 157.3 L426 157.3 L421.3 149.8 Q421.6 148.1 423 148.6 L424.3 150 Z" fill="#fff" stroke="#000" stroke-width="1.1" stroke-linejoin="round"/><path d="M429.3 146.6 L429.3 149.5 M431.6 147.4 L431.6 150" stroke="#555" stroke-width="0.7"/><text x="215.3" y="220.8" font-family="Liberation Serif" font-weight="bold" font-size="9" fill="#2a7cc4" textLength="13.5" lengthAdjust="spacingAndGlyphs">TIP</text><text x="236" y="220.9" font-family="Liberation Sans" font-size="8.6" fill="#3990d6" textLength="145" lengthAdjust="spacingAndGlyphs">Click bar area to show detail information.</text></svg>
<div class="abs" style="left:1233px;top:229px;width:16px;height:6px;border:1px solid #8a8a8a;border-bottom:none;background:#fff;"></div>
<svg width="7" height="4" style="position:absolute;left:1238px;top:230px"><path d="M0 3.5 L3.5 0 L7 3.5 Z" fill="#000"/></svg>
<div class="hdr" style="left:215px;top:233px;width:1042px;height:18.5px;border-bottom:1px solid #6a6a6a;"></div>
<div class="t" style="left:222.8px;top:238.6px;font-weight:bold;font-size:8.75px;">Trn. Rooms by Yield Category</div>
<div class="abs" style="left:1178.5px;top:236.2px;width:10px;height:9.6px;border:1px solid #4a744a;border-bottom-color:#203a20;background:linear-gradient(#d8f4d0,#8ed08a 50%,#c8eec0);"></div>
<svg width="10" height="10" style="position:absolute;left:1179.5px;top:237.2px"><path d="M1.5 2 L7.5 8 M7.5 2 L1.5 8" stroke="#2a7a2a" stroke-width="2"/></svg>
<div class="t tn" style="left:1192.5px;top:237.6px;font-size:9.2px;transform:scaleX(0.89);">Export to Excel</div>
<div class="abs" style="left:215px;top:252px;width:1px;height:419px;background:#a0a0a0"></div>
<div class="abs" style="left:1257px;top:252px;width:1px;height:419px;background:#a0a0a0"></div>
<div class="abs" style="left:216px;top:273px;width:1041px;height:1px;background:#8c8c8c"></div>
<div class="abs" style="left:216px;top:252.5px;width:218px;height:20.5px;background:#5c7fa5"></div><div class="abs" style="left:216px;top:273px;width:67px;height:315px;background:#5c7fa5"></div><div class="abs" style="left:283px;top:273px;width:122px;height:294px;background:#fff"></div><div class="abs" style="left:405px;top:273px;width:29px;height:315px;background:#fdf6dc"></div><div class="abs" style="left:283px;top:567px;width:151px;height:21px;background:#fdf6dc"></div><div class="abs" style="left:282px;top:253px;width:1px;height:20px;background:#7f9bba"></div><div class="abs" style="left:332px;top:253px;width:1px;height:20px;background:#7f9bba"></div><div class="abs" style="left:368px;top:253px;width:1px;height:20px;background:#7f9bba"></div><div class="abs" style="left:404px;top:253px;width:1px;height:20px;background:#7f9bba"></div><div class="abs" style="left:216px;top:294px;width:66px;height:1px;background:#819cb8"></div><div class="abs" style="left:216px;top:315px;width:66px;height:1px;background:#819cb8"></div><div class="abs" style="left:216px;top:336px;width:66px;height:1px;background:#819cb8"></div><div class="abs" style="left:216px;top:357px;width:66px;height:1px;background:#819cb8"></div><div class="abs" style="left:216px;top:378px;width:66px;height:1px;background:#819cb8"></div><div class="abs" style="left:216px;top:399px;width:66px;height:1px;background:#819cb8"></div><div class="abs" style="left:216px;top:420px;width:66px;height:1px;background:#819cb8"></div><div class="abs" style="left:216px;top:441px;width:66px;height:1px;background:#819cb8"></div><div class="abs" style="left:216px;top:462px;width:66px;height:1px;background:#819cb8"></div><div class="abs" style="left:216px;top:483px;width:66px;height:1px;background:#819cb8"></div><div class="abs" style="left:216px;top:504px;width:66px;height:1px;background:#819cb8"></div><div class="abs" style="left:216px;top:525px;width:66px;height:1px;background:#819cb8"></div><div class="abs" style="left:216px;top:546px;width:66px;height:1px;background:#819cb8"></div><div class="abs" style="left:216px;top:567px;width:66px;height:1px;background:#819cb8"></div><div class="abs" style="left:283px;top:294px;width:151px;height:1px;background:#b4b4b4"></div><div class="abs" style="left:283px;top:315px;width:151px;height:1px;background:#b4b4b4"></div><div class="abs" style="left:283px;top:336px;width:151px;height:1px;background:#b4b4b4"></div><div class="abs" style="left:283px;top:357px;width:151px;height:1px;background:#b4b4b4"></div><div class="abs" style="left:283px;top:378px;width:151px;height:1px;background:#b4b4b4"></div><div class="abs" style="left:283px;top:399px;width:151px;height:1px;background:#b4b4b4"></div><div class="abs" style="left:283px;top:420px;width:151px;height:1px;background:#b4b4b4"></div><div class="abs" style="left:283px;top:441px;width:151px;height:1px;background:#b4b4b4"></div><div class="abs" style="left:283px;top:462px;width:151px;height:1px;background:#b4b4b4"></div><div class="abs" style="left:283px;top:483px;width:151px;height:1px;background:#b4b4b4"></div><div class="abs" style="left:283px;top:504px;width:151px;height:1px;background:#b4b4b4"></div><div class="abs" style="left:283px;top:525px;width:151px;height:1px;background:#b4b4b4"></div><div class="abs" style="left:283px;top:546px;width:151px;height:1px;background:#b4b4b4"></div><div class="abs" style="left:283px;top:567px;width:151px;height:1px;background:#b4b4b4"></div><div class="abs" style="left:283px;top:588px;width:151px;height:1px;background:#b4b4b4"></div><div class="abs" style="left:332px;top:273px;width:1px;height:316px;background:#b4b4b4"></div><div class="abs" style="left:368px;top:273px;width:1px;height:316px;background:#b4b4b4"></div><div class="abs" style="left:404px;top:273px;width:1px;height:316px;background:#b4b4b4"></div><div class="abs" style="left:433px;top:273px;width:1px;height:316px;background:#b4b4b4"></div><div class="abs" style="left:282px;top:273px;width:1px;height:398px;background:#9a9a9a"></div><div class="t" style="left:283px;width:45px;text-align:right;top:258.8px;color:#fff;font-weight:bold;font-size:8.8px;transform:scaleX(0.9);transform-origin:right center;">SUPERIOR</div><div class="t" style="left:333px;width:31px;text-align:right;top:258.8px;color:#fff;font-weight:bold;font-size:8.8px;transform:scaleX(0.9);transform-origin:right center;">GRAND</div><div class="t" style="left:369px;width:31px;text-align:right;top:258.8px;color:#fff;font-weight:bold;font-size:8.8px;transform:scaleX(0.9);transform-origin:right center;">SUITES</div><div class="t" style="left:405px;width:24px;text-align:right;top:258.8px;color:#fff;font-weight:bold;font-size:8.8px;transform:scaleX(1.0);transform-origin:right center;">Total</div><div class="t" style="left:283px;width:45.7px;text-align:right;top:280.3px;font-size:8.8px;transform:scaleX(0.9);transform-origin:right center;">82</div><div class="t" style="left:333px;width:31.7px;text-align:right;top:280.3px;font-size:8.8px;transform:scaleX(0.9);transform-origin:right center;">31</div><div class="t" style="left:369px;width:31.7px;text-align:right;top:280.3px;font-size:8.8px;transform:scaleX(0.9);transform-origin:right center;">18</div><div class="t" style="left:405px;width:24.7px;text-align:right;top:280.3px;font-size:8.8px;transform:scaleX(0.9);transform-origin:right center;">131</div><div class="t" style="left:216px;width:63px;text-align:right;top:280px;color:#fff;font-weight:bold;font-size:8.8px;letter-spacing:0.25px;">Fri 12-11-09</div><div class="t" style="left:283px;width:45.7px;text-align:right;top:301.3px;font-size:8.8px;transform:scaleX(0.9);transform-origin:right center;">102</div><div class="t" style="left:333px;width:31.7px;text-align:right;top:301.3px;font-size:8.8px;transform:scaleX(0.9);transform-origin:right center;">46</div><div class="t" style="left:369px;width:31.7px;text-align:right;top:301.3px;font-size:8.8px;transform:scaleX(0.9);transform-origin:right center;">19</div><div class="t" style="left:405px;width:24.7px;text-align:right;top:301.3px;font-size:8.8px;transform:scaleX(0.9);transform-origin:right center;">167</div><div class="t" style="left:216px;width:63px;text-align:right;top:301px;color:#fff;font-weight:bold;font-size:8.8px;letter-spacing:0.25px;">Sat 12-12-09</div><div class="t" style="left:283px;width:45.7px;text-align:right;top:322.3px;font-size:8.8px;transform:scaleX(0.9);transform-origin:right center;">45</div><div class="t" style="left:333px;width:31.7px;text-align:right;top:322.3px;font-size:8.8px;transform:scaleX(0.9);transform-origin:right center;">14</div><div class="t" style="left:369px;width:31.7px;text-align:right;top:322.3px;font-size:8.8px;transform:scaleX(0.9);transform-origin:right center;">4</div><div class="t" style="left:405px;width:24.7px;text-align:right;top:322.3px;font-size:8.8px;transform:scaleX(0.9);transform-origin:right center;">63</div><div class="t" style="left:216px;width:63px;text-align:right;top:322px;color:#fff;font-weight:bold;font-size:8.8px;letter-spacing:0.25px;">Sun 12-13-09</div><div class="t" style="left:283px;width:45.7px;text-align:right;top:343.3px;font-size:8.8px;transform:scaleX(0.9);transform-origin:right center;">82</div><div class="t" style="left:333px;width:31.7px;text-align:right;top:343.3px;font-size:8.8px;transform:scaleX(0.9);transform-origin:right center;">19</div><div class="t" style="left:369px;width:31.7px;text-align:right;top:343.3px;font-size:8.8px;transform:scaleX(0.9);transform-origin:right center;">6</div><div class="t" style="left:405px;width:24.7px;text-align:right;top:343.3px;font-size:8.8px;transform:scaleX(0.9);transform-origin:right center;">107</div><div class="t" style="left:216px;width:63px;text-align:right;top:343px;color:#fff;font-weight:bold;font-size:8.8px;letter-spacing:0.25px;">Mon 12-14-09</div><div class="t" style="left:283px;width:45.7px;text-align:right;top:364.3px;font-size:8.8px;transform:scaleX(0.9);transform-origin:right center;">91</div><div class="t" style="left:333px;width:31.7px;text-align:right;top:364.3px;font-size:8.8px;transform:scaleX(0.9);transform-origin:right center;">22</div><div class="t" style="left:369px;width:31.7px;text-align:right;top:364.3px;font-size:8.8px;transform:scaleX(0.9);transform-origin:right center;">6</div><div class="t" style="left:405px;width:24.7px;text-align:right;top:364.3px;font-size:8.8px;transform:scaleX(0.9);transform-origin:right center;">119</div><div class="t" style="left:216px;width:63px;text-align:right;top:364px;color:#fff;font-weight:bold;font-size:8.8px;letter-spacing:0.25px;">Tue 12-15-09</div><div class="t" style="left:283px;width:45.7px;text-align:right;top:385.3px;font-size:8.8px;transform:scaleX(0.9);transform-origin:right center;">97</div><div class="t" style="left:333px;width:31.7px;text-align:right;top:385.3px;font-size:8.8px;transform:scaleX(0.9);transform-origin:right center;">14</div><div class="t" style="left:369px;width:31.7px;text-align:right;top:385.3px;font-size:8.8px;transform:scaleX(0.9);transform-origin:right center;">5</div><div class="t" style="left:405px;width:24.7px;text-align:right;top:385.3px;font-size:8.8px;transform:scaleX(0.9);transform-origin:right center;">116</div><div class="t" style="left:216px;width:63px;text-align:right;top:385px;color:#fff;font-weight:bold;font-size:8.8px;letter-spacing:0.25px;">Wed 12-16-09</div><div class="t" style="left:283px;width:45.7px;text-align:right;top:406.3px;font-size:8.8px;transform:scaleX(0.9);transform-origin:right center;">86</div><div class="t" style="left:333px;width:31.7px;text-align:right;top:406.3px;font-size:8.8px;transform:scaleX(0.9);transform-origin:right center;">14</div><div class="t" style="left:369px;width:31.7px;text-align:right;top:406.3px;font-size:8.8px;transform:scaleX(0.9);transform-origin:right center;">8</div><div class="t" style="left:405px;width:24.7px;text-align:right;top:406.3px;font-size:8.8px;transform:scaleX(0.9);transform-origin:right center;">108</div><div class="t" style="left:216px;width:63px;text-align:right;top:406px;color:#fff;font-weight:bold;font-size:8.8px;letter-spacing:0.25px;">Thu 12-17-09</div><div class="t" style="left:283px;width:45.7px;text-align:right;top:427.3px;font-size:8.8px;transform:scaleX(0.9);transform-origin:right center;">63</div><div class="t" style="left:333px;width:31.7px;text-align:right;top:427.3px;font-size:8.8px;transform:scaleX(0.9);transform-origin:right center;">36</div><div class="t" style="left:369px;width:31.7px;text-align:right;top:427.3px;font-size:8.8px;transform:scaleX(0.9);transform-origin:right center;">16</div><div class="t" style="left:405px;width:24.7px;text-align:right;top:427.3px;font-size:8.8px;transform:scaleX(0.9);transform-origin:right center;">115</div><div class="t" style="left:216px;width:63px;text-align:right;top:427px;color:#fff;font-weight:bold;font-size:8.8px;letter-spacing:0.25px;">Fri 12-18-09</div><div class="t" style="left:283px;width:45.7px;text-align:right;top:448.3px;font-size:8.8px;transform:scaleX(0.9);transform-origin:right center;">99</div><div class="t" style="left:333px;width:31.7px;text-align:right;top:448.3px;font-size:8.8px;transform:scaleX(0.9);transform-origin:right center;">45</div><div class="t" style="left:369px;width:31.7px;text-align:right;top:448.3px;font-size:8.8px;transform:scaleX(0.9);transform-origin:right center;">21</div><div class="t" style="left:405px;width:24.7px;text-align:right;top:448.3px;font-size:8.8px;transform:scaleX(0.9);transform-origin:right center;">165</div><div class="t" style="left:216px;width:63px;text-align:right;top:448px;color:#fff;font-weight:bold;font-size:8.8px;letter-spacing:0.25px;">Sat 12-19-09</div><div class="t" style="left:283px;width:45.7px;text-align:right;top:469.3px;font-size:8.8px;transform:scaleX(0.9);transform-origin:right center;">43</div><div class="t" style="left:333px;width:31.7px;text-align:right;top:469.3px;font-size:8.8px;transform:scaleX(0.9);transform-origin:right center;">11</div><div class="t" style="left:369px;width:31.7px;text-align:right;top:469.3px;font-size:8.8px;transform:scaleX(0.9);transform-origin:right center;">12</div><div class="t" style="left:405px;width:24.7px;text-align:right;top:469.3px;font-size:8.8px;transform:scaleX(0.9);transform-origin:right center;">66</div><div class="t" style="left:216px;width:63px;text-align:right;top:469px;color:#fff;font-weight:bold;font-size:8.8px;letter-spacing:0.25px;">Sun 12-20-09</div><div class="t" style="left:283px;width:45.7px;text-align:right;top:490.3px;font-size:8.8px;transform:scaleX(0.9);transform-origin:right center;">49</div><div class="t" style="left:333px;width:31.7px;text-align:right;top:490.3px;font-size:8.8px;transform:scaleX(0.9);transform-origin:right center;">12</div><div class="t" style="left:369px;width:31.7px;text-align:right;top:490.3px;font-size:8.8px;transform:scaleX(0.9);transform-origin:right center;">10</div><div class="t" style="left:405px;width:24.7px;text-align:right;top:490.3px;font-size:8.8px;transform:scaleX(0.9);transform-origin:right center;">71</div><div class="t" style="left:216px;width:63px;text-align:right;top:490px;color:#fff;font-weight:bold;font-size:8.8px;letter-spacing:0.25px;">Mon 12-21-09</div><div class="t" style="left:283px;width:45.7px;text-align:right;top:511.3px;font-size:8.8px;transform:scaleX(0.9);transform-origin:right center;">67</div><div class="t" style="left:333px;width:31.7px;text-align:right;top:511.3px;font-size:8.8px;transform:scaleX(0.9);transform-origin:right center;">11</div><div class="t" style="left:369px;width:31.7px;text-align:right;top:511.3px;font-size:8.8px;transform:scaleX(0.9);transform-origin:right center;">13</div><div class="t" style="left:405px;width:24.7px;text-align:right;top:511.3px;font-size:8.8px;transform:scaleX(0.9);transform-origin:right center;">91</div><div class="t" style="left:216px;width:63px;text-align:right;top:511px;color:#fff;font-weight:bold;font-size:8.8px;letter-spacing:0.25px;">Tue 12-22-09</div><div class="t" style="left:283px;width:45.7px;text-align:right;top:532.3px;font-size:8.8px;transform:scaleX(0.9);transform-origin:right center;">67</div><div class="t" style="left:333px;width:31.7px;text-align:right;top:532.3px;font-size:8.8px;transform:scaleX(0.9);transform-origin:right center;">16</div><div class="t" style="left:369px;width:31.7px;text-align:right;top:532.3px;font-size:8.8px;transform:scaleX(0.9);transform-origin:right center;">9</div><div class="t" style="left:405px;width:24.7px;text-align:right;top:532.3px;font-size:8.8px;transform:scaleX(0.9);transform-origin:right center;">92</div><div class="t" style="left:216px;width:63px;text-align:right;top:532px;color:#fff;font-weight:bold;font-size:8.8px;letter-spacing:0.25px;">Wed 12-23-09</div><div class="t" style="left:283px;width:45.7px;text-align:right;top:553.3px;font-size:8.8px;transform:scaleX(0.9);transform-origin:right center;">50</div><div class="t" style="left:333px;width:31.7px;text-align:right;top:553.3px;font-size:8.8px;transform:scaleX(0.9);transform-origin:right center;">18</div><div class="t" style="left:369px;width:31.7px;text-align:right;top:553.3px;font-size:8.8px;transform:scaleX(0.9);transform-origin:right center;">5</div><div class="t" style="left:405px;width:24.7px;text-align:right;top:553.3px;font-size:8.8px;transform:scaleX(0.9);transform-origin:right center;">73</div><div class="t" style="left:216px;width:63px;text-align:right;top:553px;color:#fff;font-weight:bold;font-size:8.8px;letter-spacing:0.25px;">Thu 12-24-09</div><div class="t" style="left:283px;width:45.7px;text-align:right;top:574.3px;font-size:8.8px;transform:scaleX(0.9);transform-origin:right center;">1,023</div><div class="t" style="left:333px;width:31.7px;text-align:right;top:574.3px;font-size:8.8px;transform:scaleX(0.9);transform-origin:right center;">309</div><div class="t" style="left:369px;width:31.7px;text-align:right;top:574.3px;font-size:8.8px;transform:scaleX(0.9);transform-origin:right center;">152</div><div class="t" style="left:405px;width:24.7px;text-align:right;top:574.3px;font-size:8.8px;transform:scaleX(0.9);transform-origin:right center;">1,484</div><div class="t" style="left:216px;width:63px;text-align:right;top:574px;color:#fff;font-weight:bold;font-size:8.8px;letter-spacing:0.25px;">Total</div>
</body></html>
